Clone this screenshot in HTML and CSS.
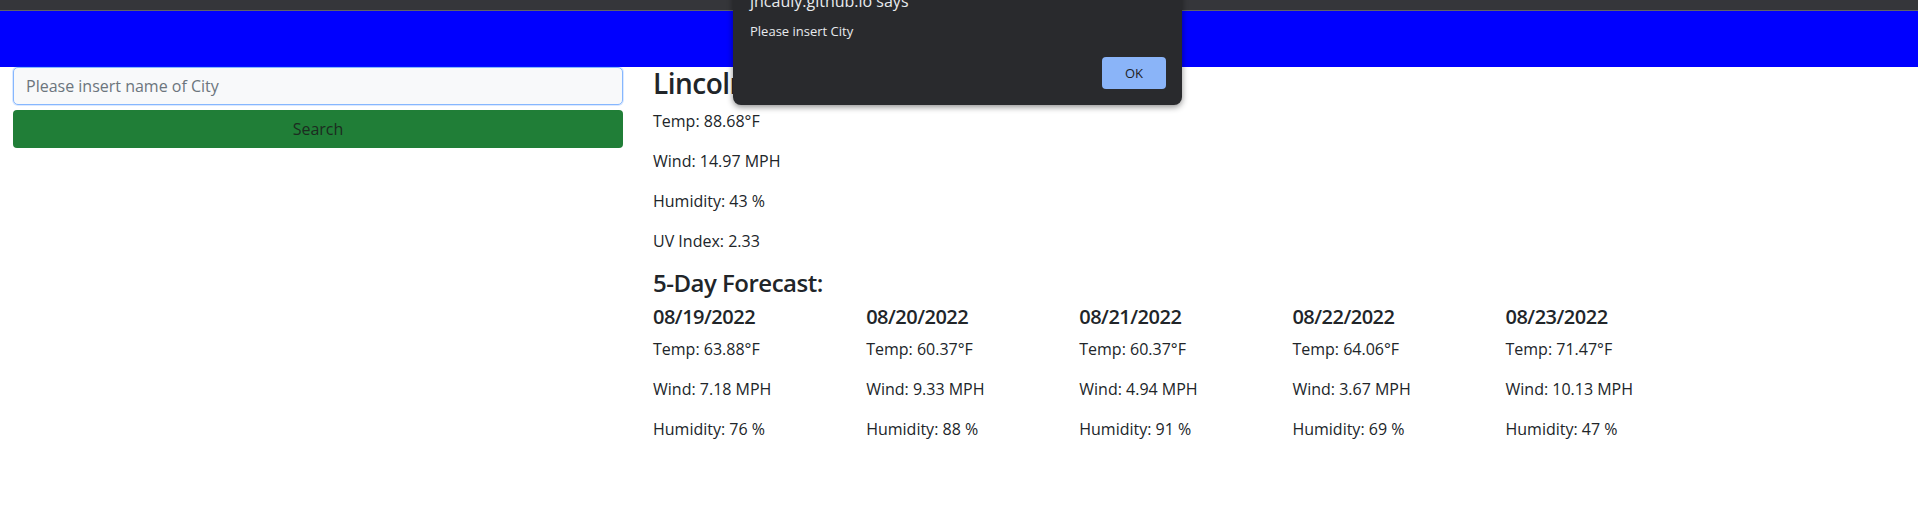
FILE: index.html
```html
<!DOCTYPE html>
<html lang="en">
<head>
<meta charset="utf-8">
<title>Weather Dashboard</title>
<link rel="stylesheet" href="styles.css">
</head>
<body>
<div class="chrome"></div>
<header class="hero"></header>
<main class="main">
  <aside class="sidebar">
    <input class="city-input" type="text" placeholder="Please insert name of City">
    <button class="search-btn" type="button">Search</button>
  </aside>
  <section class="content">
    <h3 class="city-title">Lincoln</h3>
    <p>Temp: 88.68°F</p>
    <p>Wind: 14.97 MPH</p>
    <p>Humidity: 43 %</p>
    <p>UV Index: 2.33</p>
    <h4 class="forecast-title">5-Day Forecast:</h4>
    <div class="forecast">
      <div class="day">
        <h5>08/19/2022</h5>
        <p>Temp: 63.88°F</p>
        <p>Wind: 7.18 MPH</p>
        <p>Humidity: 76 %</p>
      </div>
      <div class="day">
        <h5>08/20/2022</h5>
        <p>Temp: 60.37°F</p>
        <p>Wind: 9.33 MPH</p>
        <p>Humidity: 88 %</p>
      </div>
      <div class="day">
        <h5>08/21/2022</h5>
        <p>Temp: 60.37°F</p>
        <p>Wind: 4.94 MPH</p>
        <p>Humidity: 91 %</p>
      </div>
      <div class="day">
        <h5>08/22/2022</h5>
        <p>Temp: 64.06°F</p>
        <p>Wind: 3.67 MPH</p>
        <p>Humidity: 69 %</p>
      </div>
      <div class="day">
        <h5>08/23/2022</h5>
        <p>Temp: 71.47°F</p>
        <p>Wind: 10.13 MPH</p>
        <p>Humidity: 47 %</p>
      </div>
    </div>
  </section>
</main>
<div class="dialog" role="alertdialog">
  <div class="dialog-title">jncauly.github.io says</div>
  <div class="dialog-msg">Please insert City</div>
  <div class="dialog-actions"><button class="dialog-ok" type="button">OK</button></div>
</div>
</body>
</html>
```
FILE: styles.css
```css
* { box-sizing: border-box; }
html, body { margin: 0; padding: 0; }
body {
  font-family: "Open Sans", "Noto Sans", sans-serif;
  font-size: 16px;
  line-height: 1.5;
  color: #212529;
  background: #fff;
  position: relative;
  height: 513px;
  overflow: hidden;
}
.chrome {
  height: 11px;
  background: #35363a;
  border-bottom: 1px solid #5f6368;
}
.hero {
  height: 56px;
  background: #0000ff;
}
.main {
  display: flex;
  padding-left: 13px;
}
.sidebar {
  width: 610px;
  flex: none;
  display: flex;
  flex-direction: column;
  gap: 5px;
}
.city-input {
  height: 38px;
  width: 100%;
  padding: 6px 12px;
  font: inherit;
  color: #212529;
  background: #f8f9fa;
  border: 1px solid #86b7fe;
  border-radius: 5px;
  box-shadow: 0 0 0 1px rgba(13,110,253,0.15);
  outline: none;
}
.city-input::placeholder { color: #6c757d; }
.search-btn {
  height: 38px;
  width: 100%;
  font: inherit;
  color: #1c2b20;
  background: #207e37;
  border: none;
  border-radius: 4px;
}
.content {
  margin-left: 30px;
  flex: 1;
}
h3, h4, h5 {
  margin: 0 0 8px;
  font-weight: 600;
  line-height: 1.2;
  letter-spacing: -0.5px;
}
.city-title { font-size: 28px; }
.forecast-title { font-size: 24px; }
h5 { font-size: 20px; }
p { margin: 0 0 16px; }
.forecast {
  display: grid;
  grid-template-columns: repeat(5, 213.13px);
}
.dialog {
  position: absolute;
  left: 733px;
  top: -20px;
  width: 449px;
  height: 125px;
  padding: 11px 16px 16px 17px;
  background: #292a2d;
  color: #e8eaed;
  border-radius: 0 0 8px 8px;
  box-shadow: 0 2px 6px rgba(0,0,0,0.45);
  display: flex;
  flex-direction: column;
}
.dialog-title {
  font-size: 16px;
  line-height: 20px;
}
.dialog-msg {
  font-size: 13px;
  line-height: 16px;
  margin-top: 12px;
}
.dialog-actions {
  margin-top: auto;
  display: flex;
  justify-content: flex-end;
}
.dialog-ok {
  width: 64px;
  height: 32px;
  font-family: inherit;
  font-size: 13px;
  font-weight: 500;
  color: #202124;
  background: #8ab4f8;
  border: none;
  border-radius: 4px;
}
```
